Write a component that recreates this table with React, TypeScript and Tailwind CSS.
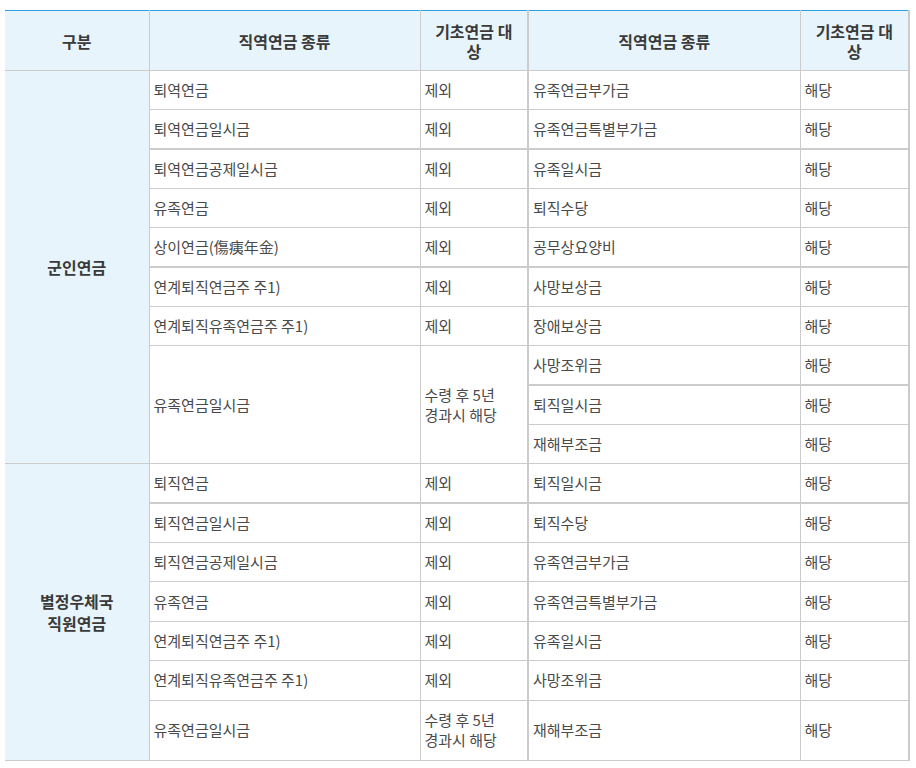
import React from "react";

type Row = {
  a?: string;
  aSpan?: number;
  b?: string;
  bSpan?: number;
  c: string;
  d: string;
  thick?: boolean; // 2px line above cols 2-5
  thickRight?: boolean; // 2px line above cols 4-5 only
  tall?: boolean;
};

type Group = { label: React.ReactNode; rows: Row[] };

const groups: Group[] = [
  {
    label: "군인연금",
    rows: [
      { a: "퇴역연금", b: "제외", c: "유족연금부가금", d: "해당" },
      { a: "퇴역연금일시금", b: "제외", c: "유족연금특별부가금", d: "해당" },
      { a: "퇴역연금공제일시금", b: "제외", c: "유족일시금", d: "해당", thick: true },
      { a: "유족연금", b: "제외", c: "퇴직수당", d: "해당" },
      { a: "상이연금(傷痍年金)", b: "제외", c: "공무상요양비", d: "해당" },
      { a: "연계퇴직연금주 주1)", b: "제외", c: "사망보상금", d: "해당", thick: true },
      { a: "연계퇴직유족연금주 주1)", b: "제외", c: "장애보상금", d: "해당" },
      { a: "유족연금일시금", aSpan: 3, b: "수령 후 5년 경과시 해당", bSpan: 3, c: "사망조위금", d: "해당" },
      { c: "퇴직일시금", d: "해당", thickRight: true },
      { c: "재해부조금", d: "해당" },
    ],
  },
  {
    label: (
      <>
        <span className="block">별정우체국</span>
        <span className="block">직원연금</span>
      </>
    ),
    rows: [
      { a: "퇴직연금", b: "제외", c: "퇴직일시금", d: "해당" },
      { a: "퇴직연금일시금", b: "제외", c: "퇴직수당", d: "해당", thick: true },
      { a: "퇴직연금공제일시금", b: "제외", c: "유족연금부가금", d: "해당" },
      { a: "유족연금", b: "제외", c: "유족연금특별부가금", d: "해당" },
      { a: "연계퇴직연금주 주1)", b: "제외", c: "유족일시금", d: "해당" },
      { a: "연계퇴직유족연금주 주1)", b: "제외", c: "사망조위금", d: "해당" },
      { a: "유족연금일시금", b: "수령 후 5년 경과시 해당", c: "재해부조금", d: "해당", tall: true },
    ],
  },
];

const th =
  "border border-[#cccccc] border-t-[#2aa0e6] bg-[#e8f4fb] px-[8px] text-center align-middle text-[16px] font-bold leading-[20px] text-[#3a3a3a]";
const td = "border border-[#cccccc] px-[4px] align-middle break-keep text-[15px] leading-[20px] text-[#4a4a4a]";

export default function App() {
  return (
    <div className="min-h-screen bg-white pl-[5px] pt-[10px]" style={{ fontFamily: '"Noto Sans CJK KR", "Noto Sans", sans-serif' }}>
      <table className="w-[904px] table-fixed border-collapse">
        <colgroup>
          <col className="w-[144px]" />
          <col className="w-[271px]" />
          <col className="w-[108px]" />
          <col className="w-[272px]" />
          <col className="w-[109px]" />
        </colgroup>
        <thead>
          <tr className="h-[60px]">
            <th className={`${th} border-l-0`}>구분</th>
            <th className={th}>직역연금 종류</th>
            <th className={th}>기초연금 대상</th>
            <th className={`${th} border-l-2`}>직역연금 종류</th>
            <th className={`${th} border-r-2 border-r-[#cccccc]`}>기초연금 대상</th>
          </tr>
        </thead>
        <tbody>
          {groups.map((g, gi) =>
            g.rows.map((r, ri) => {
              const t = r.thick ? "border-t-2" : "";
              const tr = r.thick || r.thickRight ? "border-t-2" : "";
              return (
                <tr key={`${gi}-${ri}`} className={r.tall ? "h-[60px]" : "h-[39.35px]"}>
                  {ri === 0 && (
                    <td
                      rowSpan={g.rows.length}
                      className="border border-l-0 border-[#cccccc] bg-[#e8f4fb] px-[4px] text-center align-middle text-[16px] font-bold leading-[22px] text-[#3a3a3a]"
                    >
                      {g.label}
                    </td>
                  )}
                  {r.a !== undefined && (
                    <td rowSpan={r.aSpan} className={`${td} ${t}`}>
                      {r.a}
                    </td>
                  )}
                  {r.b !== undefined && (
                    <td rowSpan={r.bSpan} className={`${td} ${t}`}>
                      {r.b}
                    </td>
                  )}
                  <td className={`${td} border-l-2 ${tr}`}>{r.c}</td>
                  <td className={`${td} border-r-2 ${tr}`}>{r.d}</td>
                </tr>
              );
            })
          )}
        </tbody>
      </table>
    </div>
  );
}
